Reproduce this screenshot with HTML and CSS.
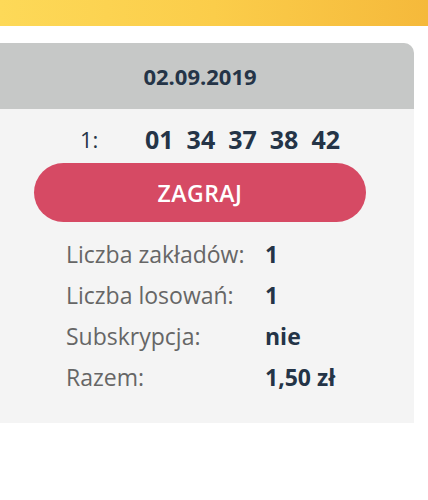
FILE: index.html
```html
<!DOCTYPE html>
<html lang="pl">
<head>
    <meta charset="UTF-8">
    <meta name="viewport" content="width=device-width, initial-scale=1.0">
    <title>Kupon</title>
    <link rel="stylesheet" href="styles.css">
</head>
<body>
    <div class="topbar"></div>

    <div class="ticket">
        <div class="ticket-head">02.09.2019</div>
        <div class="ticket-body">
            <div class="bet">
                <span class="bet-no">1:</span>
                <span class="bet-numbers">
                    <span>01</span><span>34</span><span>37</span><span>38</span><span>42</span>
                </span>
            </div>
            <button class="play">ZAGRAJ</button>
            <div class="summary">
                <div class="row"><span class="label">Liczba zakładów:</span><span class="value">1</span></div>
                <div class="row"><span class="label">Liczba losowań:</span><span class="value">1</span></div>
                <div class="row"><span class="label">Subskrypcja:</span><span class="value">nie</span></div>
                <div class="row"><span class="label">Razem:</span><span class="value">1,50 zł</span></div>
            </div>
        </div>
    </div>
</body>
</html>
```

FILE: styles.css
```css
body {
    font-family: "Open Sans", "Noto Sans", sans-serif;
    background-color: #fff;
    color: #243447;
    margin: 0;
}
.topbar {
    height: 26px;
    background: linear-gradient(90deg, #fdd958 0%, #fbcd4a 50%, #f5b93b 100%);
}
.ticket {
    width: 414px;
    margin-top: 17px;
    background-color: #f4f4f4;
    border-top-right-radius: 10px;
    overflow: hidden;
}
.ticket-head {
    height: 66px;
    background-color: #c6c8c7;
    display: flex;
    align-items: center;
    justify-content: center;
    padding-right: 14px;
    font-size: 22px;
    font-weight: 700;
}
.ticket-body {
    padding: 10px 0 26px;
}
.bet {
    display: flex;
    align-items: center;
    height: 40px;
    padding-left: 80px;
}
.bet-no {
    width: 65px;
    flex-shrink: 0;
    font-size: 22px;
    color: #243447;
}
.bet-numbers {
    display: flex;
    gap: 13px;
    font-size: 25px;
    font-weight: 700;
}
.play {
    display: block;
    width: 332px;
    height: 59px;
    margin: 4px 0 0 34px;
    border: none;
    border-radius: 30px;
    background-color: #d64a64;
    color: #fff;
    font-family: inherit;
    font-size: 23px;
    font-weight: 600;
    letter-spacing: 0.5px;
}
.summary {
    margin-top: 11px;
    padding-left: 66px;
}
.row {
    display: flex;
    height: 41px;
    align-items: center;
    font-size: 23px;
}
.label {
    width: 199px;
    color: #666;
}
.value {
    font-weight: 700;
}
```
